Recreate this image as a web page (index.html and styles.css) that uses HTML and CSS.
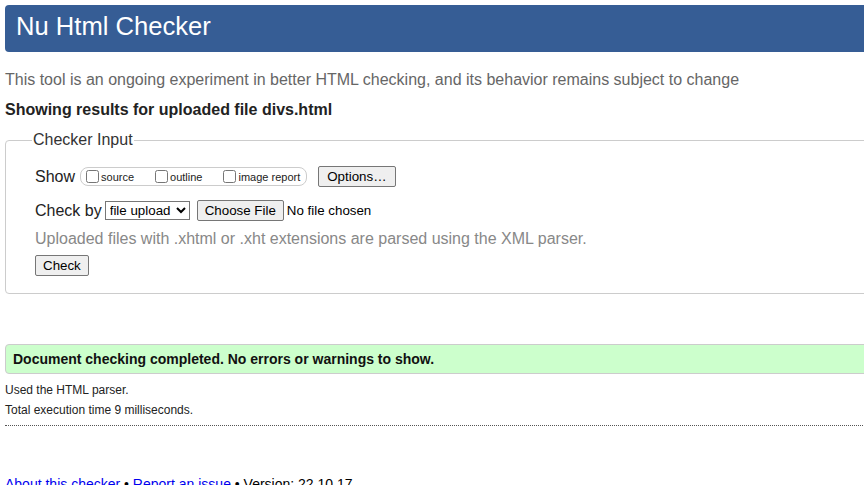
FILE: index.html
```html
<!DOCTYPE html>
<html lang="en">
<head>
<meta charset="utf-8">
<title>Showing results for divs.html - Nu Html Checker</title>
<link rel="stylesheet" href="styles.css">
</head>
<body>
<div class="page">
  <header class="banner"><h1 class="title">Nu Html Checker</h1></header>
  <p class="intro">This tool is an ongoing experiment in better HTML checking, and its behavior remains subject to change</p>
  <p class="showing">Showing results for uploaded file divs.html</p>
  <form class="checker-form">
    <fieldset class="input-box">
      <legend class="input-legend">Checker Input</legend>
      <div class="row">
        <span class="row-label">Show</span>
        <span class="show-group">
          <label class="opt"><input type="checkbox" class="cb"><span>source</span></label>
          <label class="opt"><input type="checkbox" class="cb"><span>outline</span></label>
          <label class="opt"><input type="checkbox" class="cb"><span>image report</span></label>
        </span>
        <button type="button" class="btn options-btn">Options…</button>
      </div>
      <div class="row">
        <span class="row-label">Check by</span>
        <select class="sel"><option>file upload</option></select>
        <button type="button" class="btn file-btn">Choose File</button>
        <span class="nofile">No file chosen</span>
      </div>
      <p class="note">Uploaded files with .xhtml or .xht extensions are parsed using the XML parser.</p>
      <div class="submit-row"><button type="button" class="btn">Check</button></div>
    </fieldset>
  </form>
  <div class="success">Document checking completed. No errors or warnings to show.</div>
  <div class="details-block">
    <p class="details">Used the HTML parser.</p>
    <p class="details">Total execution time 9 milliseconds.</p>
  </div>
  <hr class="dotted">
  <p class="footer"><a href="#" class="link">About this checker</a> • <a href="#" class="link">Report an issue</a> • Version: 22.10.17</p>
</div>
</body>
</html>
```
FILE: styles.css
```css
html {
  overflow: hidden;
}
body {
  margin: 0;
  background: #fff;
  color: #000;
  font-family: "Liberation Sans", Arial, sans-serif;
}
.page {
  width: 1100px;
  padding: 5px;
}
.banner {
  background: #365d95;
  border-radius: 4px;
  padding: 6px 11px 11px;
}
.title {
  margin: 0;
  color: #fff;
  font-size: 25.6px;
  font-weight: normal;
  line-height: 30px;
}
.intro {
  margin: 19px 0 0;
  font-size: 16px;
  line-height: 18px;
  color: #666;
}
.showing {
  margin: 12px 0 0;
  font-size: 16px;
  line-height: 18px;
  font-weight: bold;
  color: #222;
}
.checker-form {
  margin: 12px 0 0;
}
.input-box {
  margin: 0;
  border: 1px solid #ccc;
  border-radius: 4px;
  padding: 17px 29px 17px;
  min-width: 0;
}
.input-legend {
  margin-left: -3px;
  padding: 0 1px;
  font-size: 16px;
  line-height: 18px;
  color: #333;
}
.row {
  display: flex;
  align-items: center;
  height: 21px;
  margin-bottom: 13px;
}
.row-label {
  font-size: 16px;
  line-height: 18px;
  color: #222;
  margin-right: 4px;
}
.show-group {
  display: flex;
  align-items: center;
  gap: 21px;
  height: 17px;
  padding: 0 6px 0 5px;
  border: 1px solid #ccc;
  border-radius: 8px;
  margin-left: 1px;
}
.opt {
  display: flex;
  align-items: center;
  font-size: 11px;
  color: #222;
}
.cb {
  width: 13px;
  height: 13px;
  margin: 0 2px 0 0;
}
.btn {
  font-family: "Liberation Sans", Arial, sans-serif;
  font-size: 13.33px;
  line-height: 15px;
  padding: 2px 7px;
  border: 1px solid #767676;
  border-radius: 2px;
  background: #efefef;
  color: #000;
}
.options-btn {
  margin-left: 11px;
  padding: 2px 8px;
}
.sel {
  font-family: "Liberation Sans", Arial, sans-serif;
  font-size: 13.33px;
  height: 19px;
  width: 85px;
  margin-left: -1px;
  border: 1px solid #767676;
  border-radius: 0;
  background: #fff;
  color: #000;
  padding: 0;
}
.file-btn {
  margin-left: 7px;
}
.nofile {
  margin-left: 3px;
  font-size: 13.33px;
}
.note {
  margin: -4px 0 0;
  font-size: 16px;
  line-height: 18px;
  color: #888;
}
.submit-row {
  margin-top: 7px;
  display: flex;
}
.success {
  margin-top: 50px;
  border: 1px solid #ccc;
  border-radius: 4px;
  background: #ccffcc;
  padding: 0 7px;
  font-size: 14px;
  font-weight: bold;
  line-height: 28px;
  color: #111;
}
.details-block {
  margin-top: 6px;
}
.details {
  margin: 0;
  font-size: 12px;
  line-height: 20px;
  color: #222;
}
.dotted {
  margin: 5px 0 0;
  border: 0;
  border-top: 1px dotted #555;
  height: 0;
}
.footer {
  margin: 49px 0 0;
  font-size: 14px;
  line-height: 18px;
  color: #000;
}
.link {
  color: #0000ee;
  text-decoration: none;
}
```
